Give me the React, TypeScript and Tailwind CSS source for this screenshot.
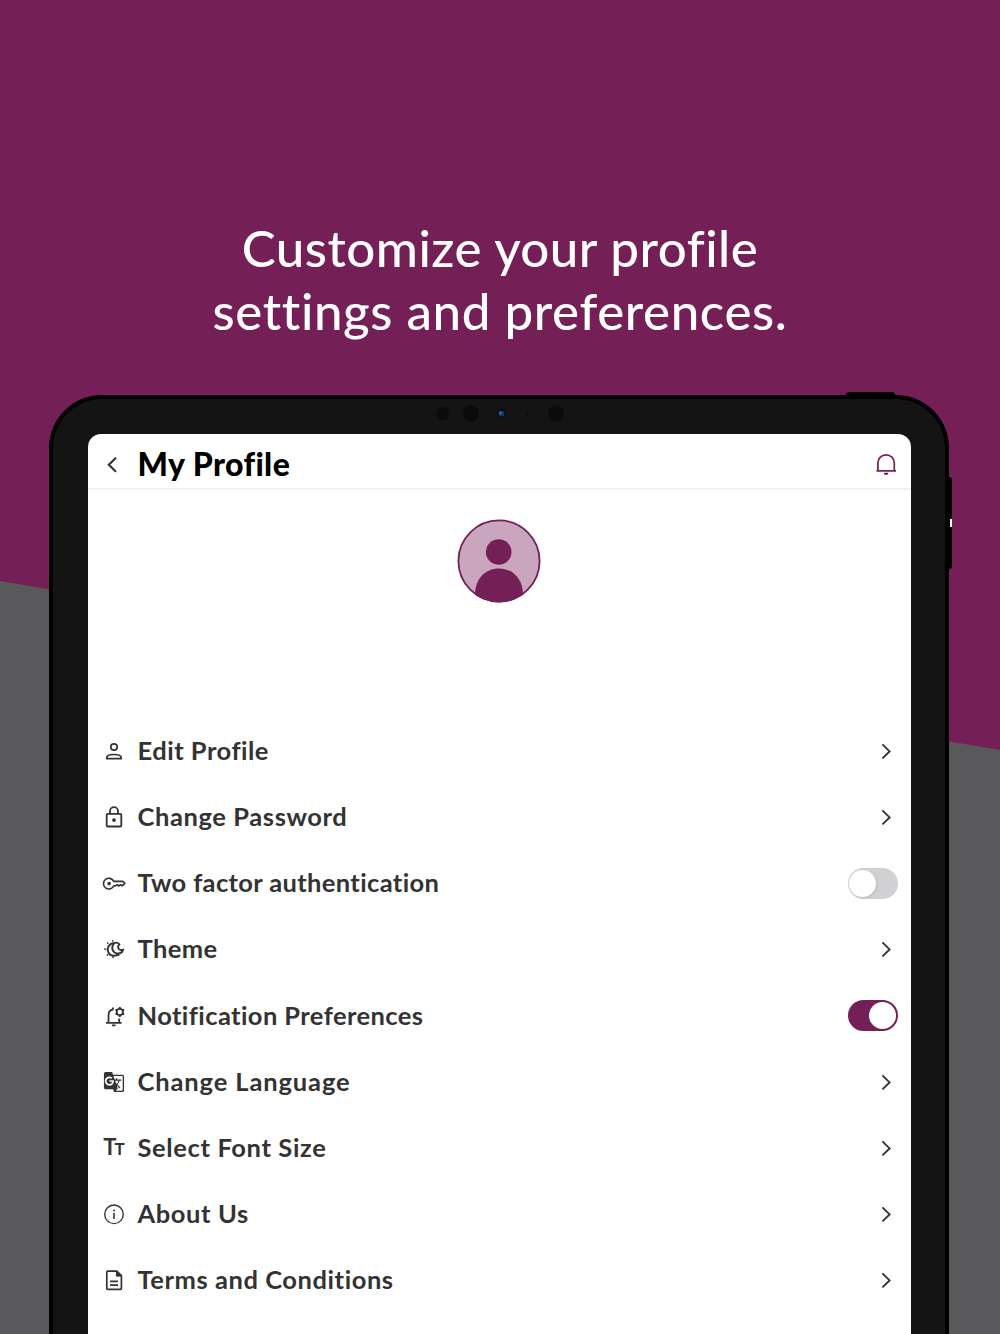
import type { ReactNode } from 'react';
import { MdGTranslate } from 'react-icons/md';

interface SettingItem {
  label: string;
  icon: ReactNode;
  tracking: string;
  toggle?: boolean;
}

const PersonIcon = () => (
  <svg width="24" height="24" viewBox="0 0 24 24" fill="none" stroke="currentColor" strokeWidth="1.7">
    <circle cx="12" cy="8" r="3.2" />
    <path d="M4.8 19.6v-.8c0-2.1 3.4-3.3 7.2-3.3s7.2 1.2 7.2 3.3v.8z" />
  </svg>
);

const LockIcon = () => (
  <svg width="24" height="24" viewBox="0 0 24 24" fill="none" stroke="currentColor" strokeWidth="1.8">
    <rect x="4.7" y="8.8" width="14.6" height="12.7" rx="1" />
    <path d="M8 8.8V6.2a4 4 0 0 1 8 0v2.6" />
    <circle cx="12" cy="15.1" r="1.9" fill="currentColor" stroke="none" />
  </svg>
);

const KeyIcon = () => (
  <svg width="24" height="24" viewBox="0 0 24 24" fill="none" stroke="currentColor" strokeWidth="1.6" strokeLinejoin="round" overflow="visible">
    <path d="M11.8 10.4h9l2.1 2-2.6 2.4-1.8-1.1-1.7 1.3-1.7-1.3-1.7 1.2h-1.6a5.4 5.4 0 1 1 0-4.5z" />
    <circle cx="7.1" cy="12.6" r="1.8" fill="currentColor" stroke="none" />
  </svg>
);

const ThemeIcon = () => (
  <svg width="24" height="24" viewBox="0 0 24 24" fill="none" stroke="currentColor" strokeWidth="1.9" strokeLinejoin="round">
    <path d="M12.2 6.2a6.3 6.3 0 1 0 4.6 10.4" />
    <path d="M13.6 5.6c-3.9 1.3-4.6 7.2-1 9.9 3.2 2.2 7.8.8 8.7-3-2.2 1-4.4.4-5.1-1.5-.6-1.7.3-2.8 1.3-3.7-1.1-1.2-2.5-1.8-3.9-1.7z" />
    <path d="M10.8 4.8V3M6.3 6.7 5.1 5.5M4.2 12.2H2.1M6.1 17.2l-1.3 1.3M11 19.2v2M16 17.6l1.2 1.3" strokeWidth="1.3" />
  </svg>
);

const BellCogIcon = () => (
  <svg width="24" height="24" viewBox="0 0 24 24" fill="none" stroke="currentColor" strokeWidth="1.8">
    <path d="M4 18.8h15.6M6.5 18.8v-7.4c0-3.2 1.9-5.4 4.5-5.9M17.2 14.4v4.4M11 5.8V3.4" />
    <path d="M9.7 20.4h4.2a2.1 2 0 0 1-4.2 0z" fill="currentColor" stroke="none" />
    <circle cx="17.8" cy="8" r="3.1" strokeWidth="1.8" />
    <path d="M17.8 4.8V3M17.8 13v-1.8M20.6 6.4l1.5-.9M13.5 10.5l1.5-.9M20.6 9.6l1.5.9M13.5 5.5l1.5.9" strokeWidth="2" />
  </svg>
);

const FontSizeIcon = () => (
  <span className="flex items-baseline pl-px font-['Lato'] font-bold leading-6">
    <span className="text-[22px]">T</span>
    <span className="-ml-[2px] text-[17px]">T</span>
  </span>
);

const InfoIcon = () => (
  <svg width="24" height="24" viewBox="0 0 24 24" fill="none" stroke="currentColor" strokeWidth="1.4">
    <circle cx="12" cy="12.3" r="9.3" />
    <path d="M12 11v6" strokeWidth="1.6" />
    <circle cx="12" cy="8.4" r="1" fill="currentColor" stroke="none" />
  </svg>
);

const DocumentIcon = () => (
  <svg width="24" height="24" viewBox="0 0 24 24" fill="none" stroke="currentColor" strokeWidth="1.7">
    <path d="M5.6 3.1h9.2l4.6 4.6v12.8c0 .5-.3.8-.8.8h-13c-.5 0-.8-.3-.8-.8V3.9c0-.5.3-.8.8-.8z" />
    <path d="M14.4 3.2v4.9h4.9z" fill="currentColor" strokeWidth="1" />
    <path d="M8 13.4h8M8 17.2h8" />
  </svg>
);

const BellIcon = () => (
  <svg width="24" height="24" viewBox="0 0 24 24" fill="none" stroke="currentColor" strokeWidth="1.7">
    <path d="M3.9 18.7V11a8.2 8.2 0 0 1 16.4 0v7.7M2.4 18.9H22" />
    <path d="M9.7 20.7h4.8a2.4 2.2 0 0 1-4.8 0z" fill="currentColor" stroke="none" />
  </svg>
);

const ChevronIcon = () => (
  <svg width="24" height="24" viewBox="0 0 24 24" fill="none" stroke="currentColor" strokeWidth="1.9">
    <path d="m8.4 5.4 7.2 7-7.2 7" />
  </svg>
);

const items: SettingItem[] = [
  { label: 'Edit Profile', icon: <PersonIcon />, tracking: 'tracking-[0.5px]' },
  { label: 'Change Password', icon: <LockIcon />, tracking: 'tracking-[0.6px]' },
  { label: 'Two factor authentication', icon: <KeyIcon />, tracking: 'tracking-[0.36px]', toggle: false },
  { label: 'Theme', icon: <ThemeIcon />, tracking: 'tracking-[0.4px]' },
  { label: 'Notification Preferences', icon: <BellCogIcon />, tracking: 'tracking-[0.41px]', toggle: true },
  { label: 'Change Language', icon: <MdGTranslate size={22} />, tracking: 'tracking-[0.88px]' },
  { label: 'Select Font Size', icon: <FontSizeIcon />, tracking: 'tracking-[0.63px]' },
  { label: 'About Us', icon: <InfoIcon />, tracking: 'tracking-[0.6px]' },
  { label: 'Terms and Conditions', icon: <DocumentIcon />, tracking: 'tracking-[0.56px]' },
];

function Toggle({ on }: { on: boolean }) {
  return (
    <div className={`flex h-[31px] w-[50px] items-center rounded-full px-[1.5px] ${on ? 'justify-end bg-[#751f57]' : 'justify-start bg-[#d1d1d3]'}`}>
      <div className={`size-[27px] rounded-full bg-white ${on ? '' : 'shadow-[1px_1px_3px_rgba(0,0,0,0.1)]'}`} />
    </div>
  );
}

function SettingRow({ item }: { item: SettingItem }) {
  return (
    <div className="flex h-[66.15px] items-center pr-[13px] pl-[14px] text-[#333]">
      <div className="flex size-6 shrink-0 items-center justify-center">{item.icon}</div>
      <span className={`ml-3 flex-1 pb-[2px] text-[25.5px] leading-9 font-bold whitespace-nowrap ${item.tracking}`}>{item.label}</span>
      {item.toggle === undefined ? <ChevronIcon /> : <Toggle on={item.toggle} />}
    </div>
  );
}

function Avatar() {
  return (
    <svg width="84" height="84" viewBox="0 0 84 84">
      <clipPath id="avatar">
        <circle cx="42" cy="42" r="41.5" />
      </clipPath>
      <circle cx="42" cy="42" r="40.6" fill="#c9a6bd" stroke="#751f57" strokeWidth="1.8" />
      <g fill="#751f57" clipPath="url(#avatar)">
        <circle cx="41.7" cy="33" r="12.8" />
        <path d="M18 76C18 60 28 49.5 42 49.5S66 60 66 76v8H18z" />
      </g>
    </svg>
  );
}

export default function App() {
  return (
    <div className="relative flex h-[1334px] w-[1000px] flex-col items-center overflow-hidden bg-[#751f57] font-['Lato','Open_Sans',sans-serif]">
      <svg className="absolute inset-0" width="1000" height="1334">
        <path d="M0 581 1000 750V1334H0z" fill="#59595b" />
      </svg>

      <h1 className="relative h-[395px] shrink-0 pt-[216px] text-center text-[51px] leading-[63px] font-medium text-white">
        <span className="block tracking-[0.5px]">Customize your profile</span>
        <span className="block tracking-[0.6px]">settings and preferences.</span>
      </h1>

      <div className="relative -ml-[2px] h-[1000px] w-[900px] shrink-0 rounded-t-[53px] border-x-4 border-t-4 border-black bg-[#141414] px-[34.5px] pt-[34.5px]">
        {/* hardware buttons */}
        <div className="absolute -top-[7px] right-[50px] h-[3px] w-[49px] rounded-t-sm bg-black" />
        <div className="absolute top-[78px] -right-[7px] h-[92px] w-[3px] rounded-r-sm bg-black" />
        <div className="absolute top-[120px] -right-[7px] h-[8px] w-[2px] bg-white" />

        {/* camera and sensors */}
        <svg className="absolute top-0 left-[380px]" width="140" height="30">
          <g fill="#0b0b0b">
            <circle cx="9.6" cy="14.5" r="6.5" />
            <circle cx="38" cy="14.5" r="8" />
            <circle cx="68.6" cy="14.5" r="4.5" />
            <circle cx="94.5" cy="14.5" r="1.6" />
            <circle cx="123" cy="14.5" r="8" />
          </g>
          <circle cx="68.4" cy="14.5" r="3" fill="#143a66" />
          <circle cx="67.4" cy="14" r="1.2" fill="#2d6fae" />
        </svg>

        <div className="flex h-full flex-col rounded-t-[13px] bg-white">
          <header className="flex h-[56px] shrink-0 items-center border-b-2 border-[#f2f2f2] pt-[7px] pr-[13px] pl-3">
            <svg width="24" height="24" viewBox="0 0 24 24" fill="none" stroke="#333" strokeWidth="2.1">
              <path d="m16 5.7-7.2 7 7.2 7" />
            </svg>
            <h2 className="ml-[14px] flex-1 text-[32px] leading-10 font-black tracking-[0.4px] text-black">My Profile</h2>
            <span className="text-[#751f57]">
              <BellIcon />
            </span>
          </header>

          <div className="flex h-[228.5px] shrink-0 justify-center pt-[29px]">
            <Avatar />
          </div>

          <div>
            {items.map(item => (
              <SettingRow key={item.label} item={item} />
            ))}
          </div>
        </div>
      </div>
    </div>
  );
}
